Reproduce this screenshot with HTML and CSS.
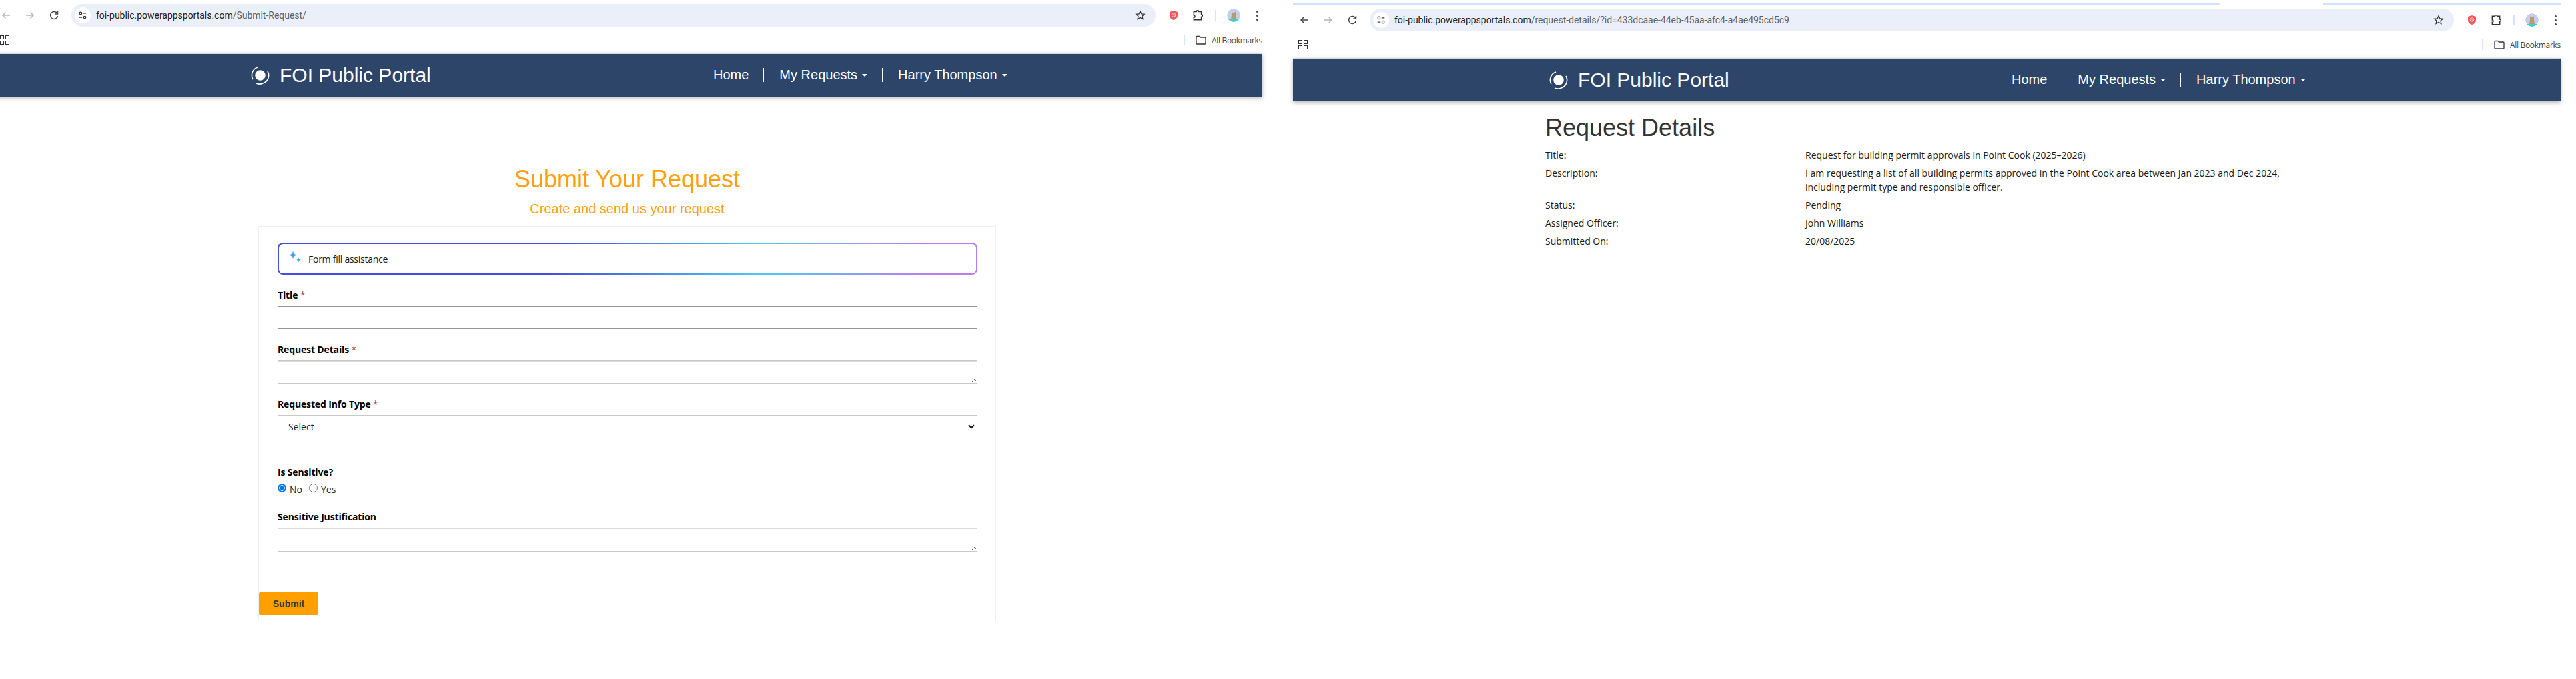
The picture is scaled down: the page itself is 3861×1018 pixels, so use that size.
FILE: index.html
```html
<!DOCTYPE html>
<html lang="en">
<head>
    <meta charset="UTF-8">
    <title>FOI Public Portal</title>
    <link rel="stylesheet" href="styles.css">
</head>
<body>
    <div class="desk">
        <!-- left browser window -->
        <section class="window window-left">
            <div class="toolbar">
                <div class="nav-btns">
                    <svg class="tb-icon muted" viewBox="0 0 16 16"><path d="M14 8H3M7.5 3.5 3 8l4.500 4.500"/></svg>
                    <svg class="tb-icon muted" viewBox="0 0 16 16"><path d="M2 8h11M8.500 3.500 13 8l-4.500 4.500"/></svg>
                    <svg class="tb-icon" viewBox="0 0 16 16"><path d="M13 5.500A5.500 5.500 0 1 0 13.500 9M13.500 2v4h-4"/></svg>
                </div>
                <div class="omnibox">
                    <span class="site-chip">
                        <svg viewBox="0 0 16 16"><circle cx="4.500" cy="4.500" r="2"/><path d="M9 4.500h5M2 11.500h5"/><circle cx="11.500" cy="11.500" r="2"/></svg>
                    </span>
                    <span class="url">foi-public.powerappsportals.com<span class="url-path">/Submit-Request/</span></span>
                    <svg class="star" viewBox="0 0 16 16"><path d="M8 1.800l1.900 4 4.300.5-3.200 3 .9 4.300L8 11.400l-3.900 2.200.9-4.300-3.200-3 4.300-.5z"/></svg>
                </div>
                <div class="tb-right">
                    <svg class="shield" viewBox="0 0 16 16"><path d="M8 1l6 2v5c0 3.500-2.500 6-6 7-3.500-1-6-3.500-6-7V3z"/><circle cx="8" cy="7.500" r="2.800"/><path d="M6 5.500l4 4"/></svg>
                    <svg class="puzzle" viewBox="0 0 16 16"><path d="M3 3h3.500a1.500 1.500 0 0 1 3 0H13v4a1.500 1.500 0 0 1 0 3v4H3v-3a1.500 1.500 0 0 0 0-3V3z"/></svg>
                    <span class="tb-divider"></span>
                    <span class="avatar"><svg viewBox="0 0 20 20"><circle cx="10" cy="10" r="10" fill="#c5cfe8"/><path d="M0 16h20v4H0z" fill="#3fd0c4"/><path d="M7 4l1.500 2h3L13 4v5l1 7H6l1-7z" fill="#b89a78"/></svg></span>
                    <span class="dots"><i></i><i></i><i></i></span>
                </div>
            </div>
            <div class="bookmarks">
                <span class="apps"><i></i><i></i><i></i><i></i></span>
                <span class="bm-divider"></span>
                <svg class="folder" viewBox="0 0 16 14"><path d="M1 2.500A1 1 0 0 1 2 1.500h4l1.500 1.500H14a1 1 0 0 1 1 1V12a1 1 0 0 1-1 1H2a1 1 0 0 1-1-1z"/></svg>
                <span class="bm-text">All Bookmarks</span>
            </div>
            <nav class="site-nav">
                <div class="nav-inner">
                    <a class="brand">
                        <svg class="brand-logo" viewBox="0 0 28 28"><circle cx="14" cy="14" r="7" fill="#fff"/><path d="M3 20A12.500 12.500 0 0 1 10 2"/><path d="M25 8a12.500 12.500 0 0 1-7 18"/><path d="M8 26a12 12 0 0 0 10 0"/></svg>
                        FOI Public Portal
                    </a>
                    <ul class="menu">
                        <li>Home</li>
                        <li>My Requests<span class="caret"></span></li>
                        <li>Harry Thompson<span class="caret"></span></li>
                    </ul>
                </div>
            </nav>
            <main class="submit-page">
                <h1 class="submit-title">Submit Your Request</h1>
                <h2 class="submit-sub">Create and send us your request</h2>
                <form class="card">
                    <div class="card-body">
                        <div class="assist">
                            <svg class="sparkle" viewBox="0 0 20 20"><path d="M7 0c.6 4 2 5.500 6 6.500-4 1-5.400 2.500-6 6.500C6.400 9 5 7.500 1 6.500 5 5.500 6.400 4 7 0z" fill="#4a9bf5"/><path d="M15.500 10c.3 2.300 1 3 3.500 3.700-2.500.7-3.200 1.400-3.500 3.800-.3-2.400-1-3.100-3.500-3.800 2.500-.7 3.200-1.400 3.500-3.700z" fill="#1fb6e8"/></svg>
                            <span>Form fill assistance</span>
                        </div>
                        <div class="field field-title">
                            <label>Title <b class="req">*</b></label>
                            <input class="input input-hover" type="text">
                        </div>
                        <div class="field field-details">
                            <label>Request Details <b class="req">*</b></label>
                            <textarea class="input"></textarea>
                        </div>
                        <div class="field field-type">
                            <label>Requested Info Type <b class="req">*</b></label>
                            <div class="input select-box">Select
                                <svg class="chevron" viewBox="0 0 10 7"><path d="M1 1.200 5 5l4-3.800"/></svg>
                            </div>
                        </div>
                        <div class="field field-sensitive">
                            <label>Is Sensitive?</label>
                            <div class="radios">
                                <span class="radio radio-on"></span><span class="radio-label">No</span>
                                <span class="radio"></span><span class="radio-label">Yes</span>
                            </div>
                        </div>
                        <div class="field field-just">
                            <label>Sensitive Justification</label>
                            <textarea class="input input-tall"></textarea>
                        </div>
                    </div>
                    <div class="card-actions">
                        <button class="submit-btn" type="button">Submit</button>
                    </div>
                </form>
            </main>
        </section>

        <!-- right browser window -->
        <section class="window window-right">
            <div class="tab-strip">
                <span class="strip-a"></span>
                <span class="strip-gap"></span>
                <span class="strip-b"></span>
            </div>
            <div class="toolbar">
                <div class="nav-btns">
                    <svg class="tb-icon" viewBox="0 0 16 16"><path d="M14 8H3M7.5 3.5 3 8l4.500 4.500"/></svg>
                    <svg class="tb-icon muted" viewBox="0 0 16 16"><path d="M2 8h11M8.500 3.500 13 8l-4.500 4.500"/></svg>
                    <svg class="tb-icon" viewBox="0 0 16 16"><path d="M13 5.500A5.500 5.500 0 1 0 13.500 9M13.500 2v4h-4"/></svg>
                </div>
                <div class="omnibox">
                    <span class="site-chip">
                        <svg viewBox="0 0 16 16"><circle cx="4.500" cy="4.500" r="2"/><path d="M9 4.500h5M2 11.500h5"/><circle cx="11.500" cy="11.500" r="2"/></svg>
                    </span>
                    <span class="url">foi-public.powerappsportals.com<span class="url-path">/request-details/?id=433dcaae-44eb-45aa-afc4-a4ae495cd5c9</span></span>
                    <svg class="star" viewBox="0 0 16 16"><path d="M8 1.800l1.900 4 4.300.5-3.200 3 .9 4.300L8 11.400l-3.900 2.200.9-4.300-3.200-3 4.300-.5z"/></svg>
                </div>
                <div class="tb-right">
                    <svg class="shield" viewBox="0 0 16 16"><path d="M8 1l6 2v5c0 3.500-2.500 6-6 7-3.500-1-6-3.500-6-7V3z"/><circle cx="8" cy="7.500" r="2.800"/><path d="M6 5.500l4 4"/></svg>
                    <svg class="puzzle" viewBox="0 0 16 16"><path d="M3 3h3.500a1.500 1.500 0 0 1 3 0H13v4a1.500 1.500 0 0 1 0 3v4H3v-3a1.500 1.500 0 0 0 0-3V3z"/></svg>
                    <span class="tb-divider"></span>
                    <span class="avatar"><svg viewBox="0 0 20 20"><circle cx="10" cy="10" r="10" fill="#c5cfe8"/><path d="M0 16h20v4H0z" fill="#3fd0c4"/><path d="M7 4l1.500 2h3L13 4v5l1 7H6l1-7z" fill="#b89a78"/></svg></span>
                    <span class="dots"><i></i><i></i><i></i></span>
                </div>
            </div>
            <div class="bookmarks">
                <span class="apps"><i></i><i></i><i></i><i></i></span>
                <span class="bm-divider"></span>
                <svg class="folder" viewBox="0 0 16 14"><path d="M1 2.500A1 1 0 0 1 2 1.500h4l1.500 1.500H14a1 1 0 0 1 1 1V12a1 1 0 0 1-1 1H2a1 1 0 0 1-1-1z"/></svg>
                <span class="bm-text">All Bookmarks</span>
            </div>
            <nav class="site-nav">
                <div class="nav-inner">
                    <a class="brand">
                        <svg class="brand-logo" viewBox="0 0 28 28"><circle cx="14" cy="14" r="7" fill="#fff"/><path d="M3 20A12.500 12.500 0 0 1 10 2"/><path d="M25 8a12.500 12.500 0 0 1-7 18"/><path d="M8 26a12 12 0 0 0 10 0"/></svg>
                        FOI Public Portal
                    </a>
                    <ul class="menu">
                        <li>Home</li>
                        <li>My Requests<span class="caret"></span></li>
                        <li>Harry Thompson<span class="caret"></span></li>
                    </ul>
                </div>
            </nav>
            <main class="details-page">
                <h1 class="details-title">Request Details</h1>
                <div class="detail-row"><div class="detail-label">Title:</div><div class="detail-value">Request for building permit approvals in Point Cook (2025–2026)</div></div>
                <div class="detail-row"><div class="detail-label">Description:</div><div class="detail-value">I am requesting a list of all building permits approved in the Point Cook area between Jan 2023 and Dec 2024, including permit type and responsible officer.</div></div>
                <div class="detail-row"><div class="detail-label">Status:</div><div class="detail-value">Pending</div></div>
                <div class="detail-row"><div class="detail-label">Assigned Officer:</div><div class="detail-value">John Williams</div></div>
                <div class="detail-row"><div class="detail-label">Submitted On:</div><div class="detail-value">20/08/2025</div></div>
            </main>
        </section>
    </div>
</body>
</html>
```

FILE: styles.css
```css
html, body {
    margin: 0;
    padding: 0;
    background: #fff;
    overflow: hidden;
}
body {
    font-family: "Open Sans", "Noto Sans", sans-serif;
    color: #1a1a1a;
    font-size: 14px;
}
.desk {
    display: flex;
    width: 3861px;
    height: 1018px;
    overflow: hidden;
}
.window {
    width: 1900px;
    flex: none;
    display: flex;
    flex-direction: column;
}
.window-left {
    margin-left: -8px;
}
.window-right {
    margin-left: 46px;
}

/* browser chrome */
.tab-strip {
    display: flex;
    height: 7px;
    align-items: flex-end;
}
.tab-strip span {
    height: 2px;
    background: #d3e3fd;
}
.strip-a { width: 1389px; }
.tab-strip .strip-gap { width: 155px; background: #fff; }
.strip-b { flex: 1; }
.toolbar {
    display: flex;
    align-items: center;
    height: 34px;
    padding-top: 6px;
}
.nav-btns {
    display: flex;
    width: 115px;
    padding-left: 9px;
    box-sizing: border-box;
    gap: 20px;
}
.tb-icon {
    width: 16px;
    height: 16px;
    fill: none;
    stroke: #444;
    stroke-width: 1.500;
}
.tb-icon.muted { stroke: #b4b6ba; }
.omnibox {
    width: 1625px;
    height: 34px;
    background: #ebeff9;
    border-radius: 17px;
    display: flex;
    align-items: center;
    padding-left: 5px;
    box-sizing: border-box;
}
.site-chip {
    width: 24px;
    height: 24px;
    background: #fff;
    border-radius: 50%;
    display: flex;
    align-items: center;
    justify-content: center;
    margin-right: 8px;
}
.site-chip svg {
    width: 14px;
    height: 14px;
    fill: none;
    stroke: #333;
    stroke-width: 1.400;
}
.url {
    font-family: Roboto, "Noto Sans", sans-serif;
    font-size: 14px;
    letter-spacing: -0.02px;
    color: #1f1f1f;
    flex: 1;
}
.url-path { color: #5f6368; }
.star {
    width: 16px;
    height: 16px;
    fill: none;
    stroke: #333;
    stroke-width: 1.300;
    margin-right: 15px;
}
.tb-right {
    flex: 1;
    display: flex;
    align-items: center;
    position: relative;
    height: 34px;
}
.shield {
    width: 16px;
    height: 16px;
    margin-left: 19px;
    fill: #f4545c;
}
.shield circle, .shield path + circle + path {
    fill: none;
    stroke: #fbd3d5;
    stroke-width: 1;
}
.puzzle {
    width: 18px;
    height: 18px;
    margin-left: 19px;
    fill: none;
    stroke: #333;
    stroke-width: 1.400;
}
.tb-divider {
    width: 2px;
    height: 16px;
    background: #d3e3fd;
    margin-left: 17px;
}
.avatar {
    width: 20px;
    height: 20px;
    margin-left: 16px;
    border-radius: 50%;
    overflow: hidden;
    display: block;
}
.avatar svg { display: block; }
.dots {
    display: flex;
    flex-direction: column;
    gap: 3px;
    margin-left: 24px;
}
.dots i {
    width: 3px;
    height: 3px;
    background: #444;
    border-radius: 50%;
    display: block;
}
.bookmarks {
    height: 40px;
    display: flex;
    align-items: center;
    box-sizing: border-box;
    font-size: 12px;
    color: #444;
    overflow: hidden;
}
.apps {
    display: grid;
    grid-template-columns: 6px 6px;
    gap: 2px;
    margin-left: 8px;
    margin-right: auto;
}
.apps i {
    width: 4px;
    height: 4px;
    border: 1px solid #333;
    display: block;
}
.bm-divider {
    width: 2px;
    height: 16px;
    background: #d3e3fd;
    margin-right: 16px;
}
.folder {
    width: 16px;
    height: 14px;
    fill: none;
    stroke: #333;
    stroke-width: 1.300;
    margin-right: 8px;
}
.bm-text {
    font-family: "Open Sans", sans-serif;
    font-size: 12px;
    letter-spacing: -0.3px;
    white-space: nowrap;
}

/* site nav */
.site-nav {
    height: 64px;
    background: #2d4569;
    border-top: 1px solid #d8d8d8;
    box-shadow: 0 2px 6px rgba(0, 0, 0, 0.3);
    font-family: "Liberation Sans", Arial, sans-serif;
    color: #fff;
    position: relative;
}
.nav-inner {
    width: 1170px;
    margin: 0 auto;
    padding-left: 19px;
    box-sizing: border-box;
    display: flex;
    height: 64px;
    align-items: center;
}
.brand {
    width: 693px;
    flex: none;
    display: flex;
    align-items: center;
    font-size: 30px;
    gap: 15px;
}
.brand-logo {
    width: 28px;
    height: 28px;
    fill: none;
    stroke: #fff;
    stroke-width: 1.600;
}
.menu {
    list-style: none;
    margin: -2px 0 0;
    padding: 0;
    display: flex;
    font-size: 20px;
    line-height: 21px;
}
.menu li {
    padding: 0 22px 0 23px;
    border-left: 1px solid #fff;
    white-space: nowrap;
}
.menu li:first-child {
    padding-left: 0;
    border-left: 0;
}
.caret {
    display: inline-block;
    margin-left: 7px;
    vertical-align: middle;
    border-top: 4px solid #fff;
    border-left: 4px solid transparent;
    border-right: 4px solid transparent;
}

/* submit form */
.submit-page {
    padding-top: 104px;
    width: 1106px;
    margin-left: 395px;
}
.submit-title, .submit-sub {
    font-family: "Liberation Sans", Arial, sans-serif;
    font-weight: normal;
    color: #ff9f0a;
    text-align: center;
    margin: 0;
}
.submit-title {
    font-size: 36px;
    line-height: 40px;
}
.submit-sub {
    font-size: 20px;
    line-height: 24px;
    margin-top: 12px;
}
.card {
    margin-top: 14px;
    border: 1px solid #efefef;
    border-bottom: 0;
    height: 591px;
    display: flex;
    flex-direction: column;
}
.card-body {
    padding: 24px 27px 0 28px;
    height: 548px;
    box-sizing: border-box;
    flex: none;
    border-bottom: 1px solid #e6e6e6;
}
.assist {
    height: 48px;
    box-sizing: border-box;
    border: 2px solid transparent;
    border-radius: 8px;
    background: linear-gradient(#fff, #fff) padding-box,
        linear-gradient(90deg, #4650e0 0%, #4650e0 40%, #4cc9f5 69%, #b87cf5 93%, #b87cf5 100%) border-box;
    display: flex;
    align-items: center;
    padding-left: 14px;
    font-size: 14px;
    letter-spacing: -0.25px;
    gap: 10px;
}
.sparkle {
    width: 20px;
    height: 20px;
    margin-top: -4px;
}
.field {
    display: flex;
    flex-direction: column;
}
.field label {
    font-weight: 700;
    font-size: 14px;
    line-height: 20px;
    letter-spacing: -0.15px;
    color: #000;
    margin-bottom: 6px;
}
.req {
    color: #a94442;
    font-weight: 400;
}
.field-title { margin-top: 21px; }
.field-details { margin-top: 21px; }
.field-type { margin-top: 21px; }
.field-sensitive { margin-top: 41px; }
.field-just { margin-top: 22px; }
.input {
    display: block;
    width: 100%;
    box-sizing: border-box;
    height: 35px;
    margin: 0;
    padding: 6px 12px;
    background: #fff;
    border: 1px solid #c8c8c8;
    box-shadow: inset 0 1px 0 #dcdcdc;
    font-family: inherit;
    font-size: 14px;
    border-radius: 0;
    outline: 0;
}
.input-hover {
    height: 34px;
    border-color: #969696;
    box-shadow: none;
}
.input-tall { height: 36px; }
.select-box {
    display: flex;
    align-items: center;
    justify-content: space-between;
    padding: 0 3px 0 15px;
    color: #222;
}
.chevron {
    width: 10px;
    height: 7px;
    fill: none;
    stroke: #111;
    stroke-width: 2;
}
.radios {
    display: flex;
    align-items: center;
    height: 20px;
    margin-top: -1px;
    color: #222;
}
.radio {
    width: 13px;
    height: 13px;
    box-sizing: border-box;
    border: 1px solid #767676;
    border-radius: 50%;
    margin-top: -3px;
    background: #fff;
}
.radio-on {
    border: 2px solid #0075e0;
    box-shadow: inset 0 0 0 1.500px #fff;
    background: #0075e0;
}
.radio-label {
    margin-left: 5px;
    margin-right: 10px;
}
.card-actions {
    display: flex;
}
.submit-btn {
    width: 89px;
    height: 34px;
    border: 0;
    border-radius: 2px;
    background: #ff9f00;
    color: #333;
    font-family: "Liberation Sans", Arial, sans-serif;
    font-weight: 700;
    font-size: 14px;
    padding: 0;
}

/* details page */
.details-page {
    width: 1170px;
    margin: 0 auto;
    padding: 18px 0 0 13px;
    box-sizing: border-box;
}
.details-title {
    font-family: "Liberation Sans", Arial, sans-serif;
    font-weight: normal;
    font-size: 36px;
    line-height: 44px;
    color: #333;
    margin: 0 0 5px;
}
.detail-row {
    display: flex;
    padding: 3px 0;
    line-height: 21px;
}
.detail-label {
    width: 390px;
    flex: none;
}
.detail-value {
    width: 750px;
    flex: none;
}
```
